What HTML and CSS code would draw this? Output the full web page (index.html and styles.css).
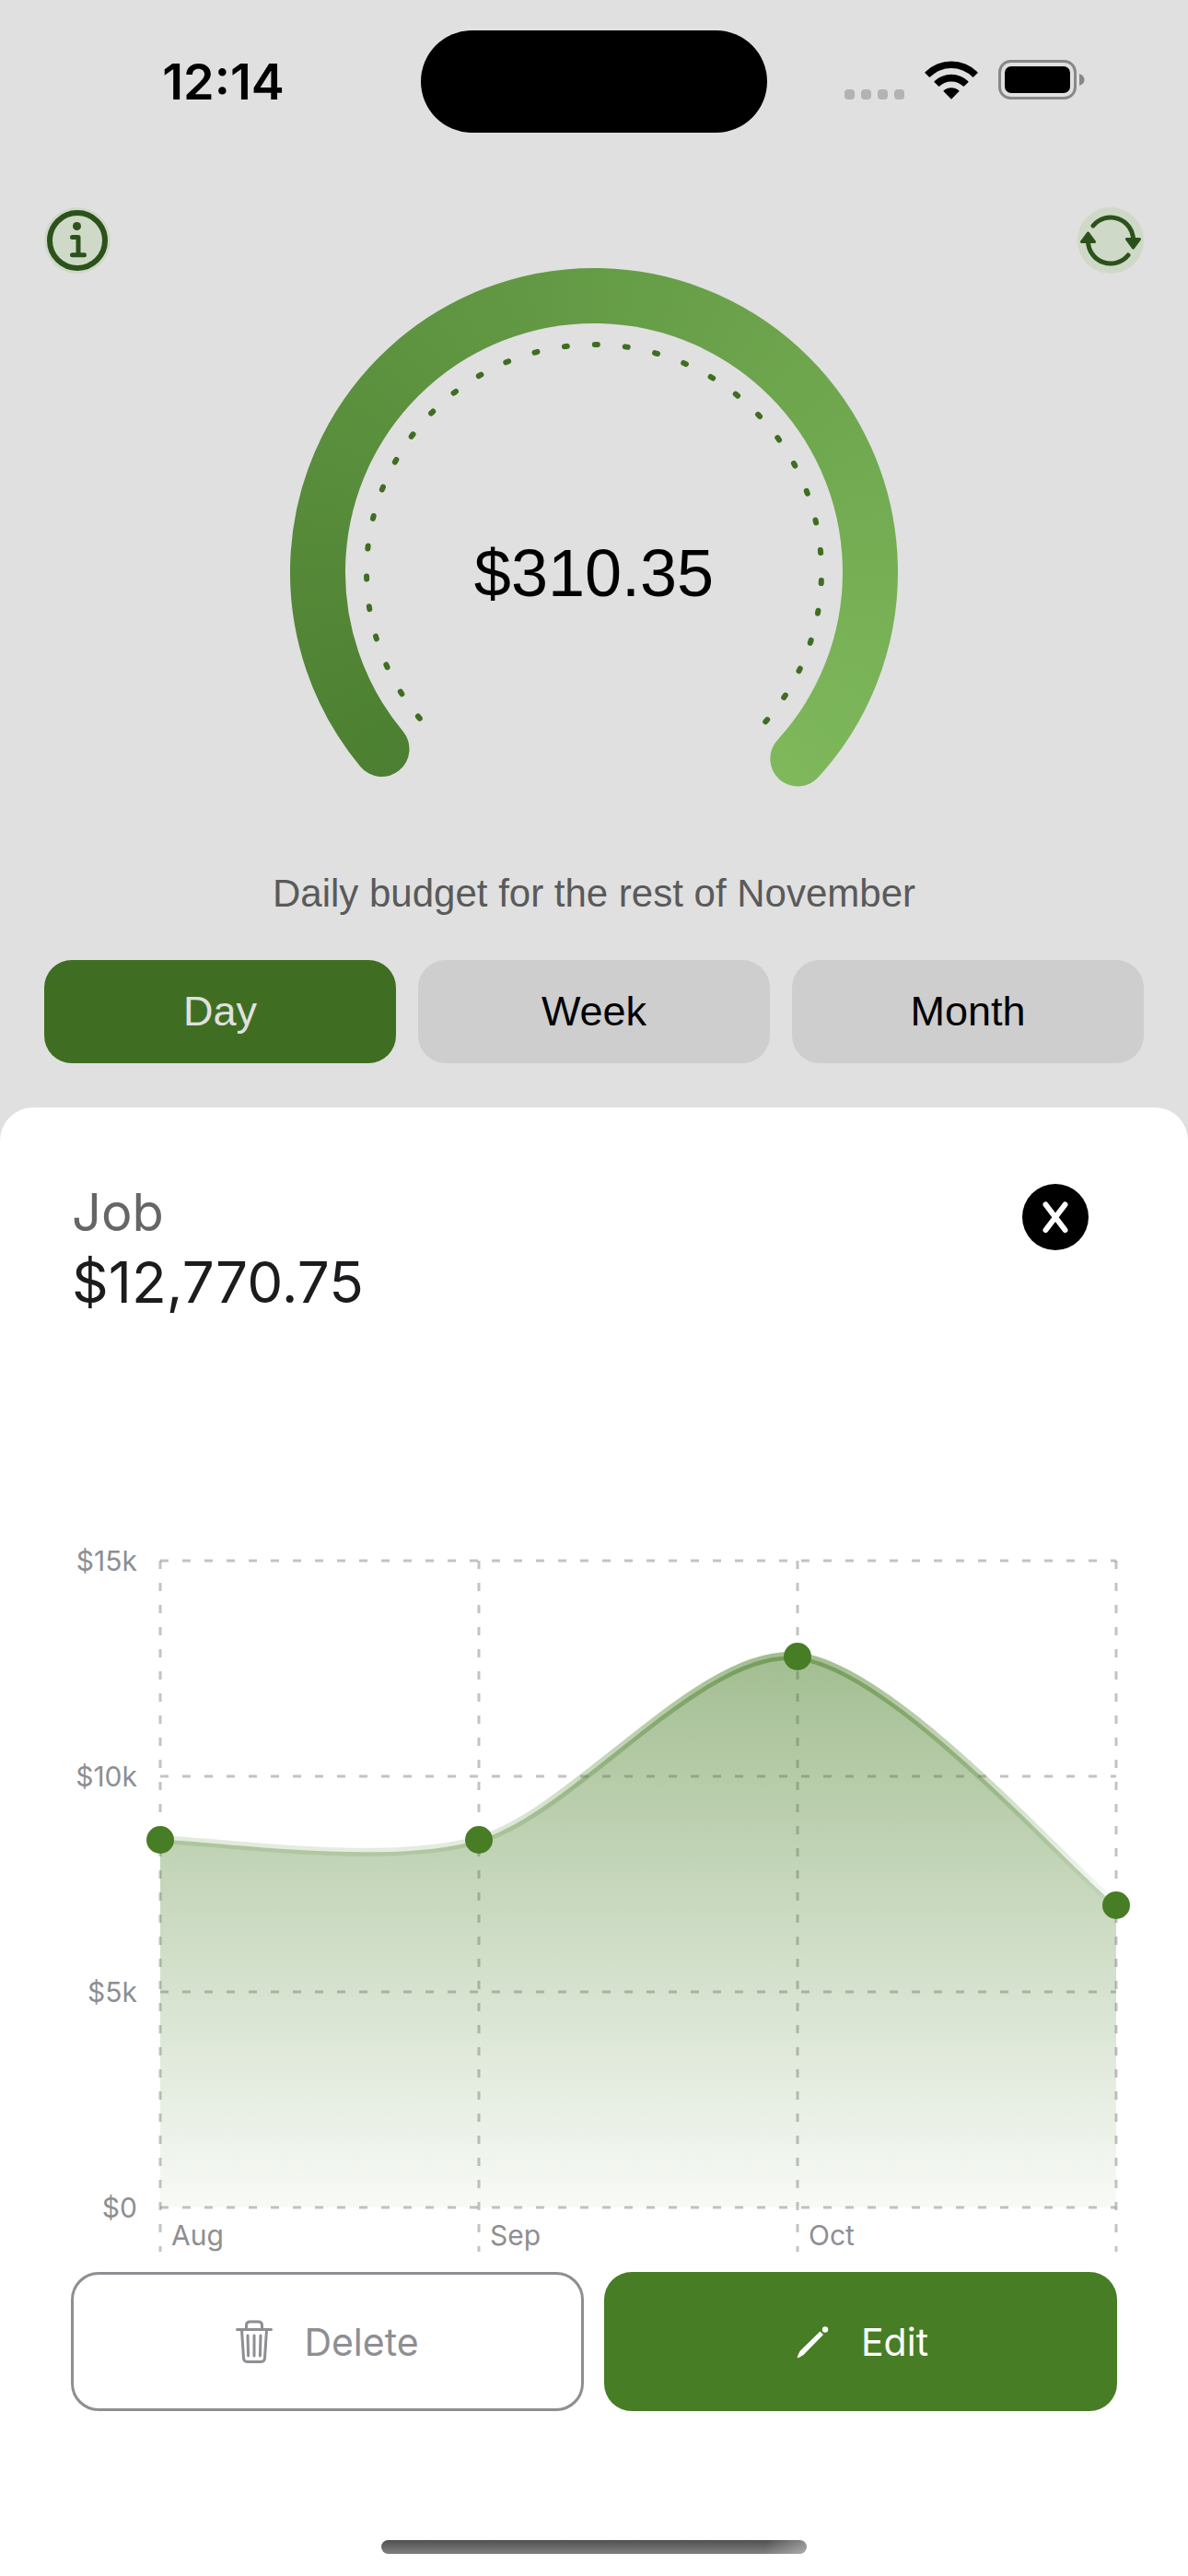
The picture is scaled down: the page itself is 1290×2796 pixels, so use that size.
FILE: index.html
```html
<!DOCTYPE html>
<html lang="en">
  <head>
    <meta charset="UTF-8" />
    <meta name="viewport" content="width=device-width, initial-scale=1" />
    <title>Budget</title>
    <link rel="stylesheet" href="styles.css">
  </head>
  <body>
    <header class="status-bar">
      <span class="time">12:14</span>
      <span class="island"></span>
      <div class="status-icons">
        <svg class="signal" viewBox="0 0 65 11" aria-hidden="true">
          <rect x="0" width="11" height="11" rx="4" />
          <rect x="18" width="11" height="11" rx="4" />
          <rect x="36" width="11" height="11" rx="4" />
          <rect x="54" width="11" height="11" rx="4" />
        </svg>
        <svg class="wifi" viewBox="0 0 58 43" aria-hidden="true">
          <path d="M0.5 13.2a40.5 40.5 0 0 1 57 0q.5 .5 0 1l-4.300 4.300q-.6 .6 -1.200 0a32.500 32.500 0 0 0-46 0q-.6 .6-1.200 0L.5 14.200q-.5-.5 0-1z" />
          <path d="M10.600 23.200a26.500 26.500 0 0 1 36.800 0q.5 .5 0 1l-4.400 4.400q-.6 .6-1.200 0a18.500 18.500 0 0 0-25.600 0q-.6 .6-1.200 0l-4.400-4.400q-.5-.5 0-1z" />
          <path d="M20.700 33.300a12.500 12.500 0 0 1 16.600 0q.5 .5 0 1L29.500 42.200q-.5 .5-1 0l-7.800-7.900q-.5-.5 0-1z" />
        </svg>
        <svg class="battery" viewBox="0 0 94 43" aria-hidden="true">
          <rect class="battery-case" x="1.500" y="1.500" width="82" height="40" rx="12" />
          <rect x="7" y="7" width="71" height="29" rx="7" />
          <path class="battery-tip" d="M88 15q5.500 2 5.500 6.500T88 28z" />
        </svg>
      </div>
    </header>

    <main>
      <section class="overview">
        <div class="toolbar">
          <button class="round-button" aria-label="Information">
            <svg viewBox="0 0 72 72" aria-hidden="true">
              <circle class="line" cx="36" cy="36" r="30" />
              <circle class="solid" cx="35.500" cy="20.500" r="4.500" />
              <path class="line thin" d="M30.500 32.500h6.500V51.500M30.500 51.700h13" />
            </svg>
          </button>
          <button class="round-button" aria-label="Refresh">
            <svg viewBox="0 0 72 72" aria-hidden="true">
              <path class="line thin" d="M17 20A24.500 24.500 0 0 1 60.500 35M55 52A24.500 24.500 0 0 1 11.500 37" />
              <path class="solid join" d="M53.500 34.500h14L60.500 44zM4.500 37.500h14L11.500 28z" />
            </svg>
          </button>
        </div>

        <div class="gauge">
          <svg viewBox="0 0 660 576" aria-hidden="true">
            <mask id="ring" maskUnits="userSpaceOnUse" x="0" y="0" width="660" height="576">
              <path d="M99.500 523A300 300 0 1 1 551.300 533.500" fill="none" stroke="#fff" stroke-width="60" stroke-linecap="round" />
            </mask>
            <foreignObject width="660" height="576" mask="url(#ring)">
              <div class="gauge-fill"></div>
            </foreignObject>
            <path class="gauge-dots" d="M140.800 489.800A247 247 0 1 1 513.600 496.300" />
          </svg>
          <p class="gauge-value">$310.35</p>
        </div>

        <p class="caption">Daily budget for the rest of November</p>

        <div class="periods">
          <button class="period active">Day</button>
          <button class="period">Week</button>
          <button class="period">Month</button>
        </div>
      </section>

      <section class="sheet">
        <div class="sheet-header">
          <div>
            <h2>Job</h2>
            <p class="amount">$12,770.75</p>
          </div>
          <button class="close" aria-label="Close">
            <svg viewBox="0 0 72 72" aria-hidden="true">
              <path d="M25.500 22.500L46.500 50M46.500 22.500L25.500 50" />
            </svg>
          </button>
        </div>

        <svg class="chart" viewBox="0 0 1290 780" role="img" aria-label="Monthly amounts">
          <defs>
            <linearGradient id="area" x1="0" y1="0" x2="0" y2="1">
              <stop offset="0" stop-color="#477d25" stop-opacity="0.5" />
              <stop offset="1" stop-color="#477d25" stop-opacity="0.04" />
            </linearGradient>
          </defs>
          <g class="grid">
            <path d="M174 24H1212M174 258H1212M174 492H1212M174 726H1212" />
            <path d="M174 24V774M520 24V774M866 24V774M1212 24V774" />
          </g>
          <path fill="url(#area)" d="M174 327C226 327 416 357 520 327S762 117 866 128C970 139 1160 357 1212 398V726H174z" />
          <path class="curve" stroke="url(#area)" d="M174 327C226 327 416 357 520 327S762 117 866 128C970 139 1160 357 1212 398" />
          <g class="points">
            <circle cx="174" cy="327" r="15" />
            <circle cx="520" cy="327" r="15" />
            <circle cx="866" cy="128" r="15" />
            <circle cx="1212" cy="398" r="15" />
          </g>
          <g class="labels labels-y">
            <text x="149" y="35">$15k</text>
            <text x="149" y="269">$10k</text>
            <text x="149" y="503">$5k</text>
            <text x="149" y="737">$0</text>
          </g>
          <g class="labels">
            <text x="186" y="767">Aug</text>
            <text x="532" y="767">Sep</text>
            <text x="878" y="767">Oct</text>
          </g>
        </svg>

        <div class="actions">
          <button class="action delete">
            <svg viewBox="0 0 40 48" aria-hidden="true">
              <path d="M1.500 10.500h37M11.500 10V6q0-4 4-4h9q4 0 4 4v4M6.500 11l2 30.500q.3 4 4 4h15q3.700 0 4-4l2-30.500" />
              <path d="M13 17l.6 22M20 17v22M27 17l-.6 22" />
            </svg>
            Delete
          </button>
          <button class="action edit">
            <svg viewBox="0 0 40 48" aria-hidden="true">
              <path d="M5 41q-.5-.5 0-1.500l2.500-5.500L29.500 12.500l3.500 3.500L11.500 38l-5 3q-1 .5-1.500 0z" />
              <circle cx="35" cy="10.500" r="3.200" />
            </svg>
            Edit
          </button>
        </div>

        <div class="home-indicator"></div>
      </section>
    </main>
  </body>
</html>
```
FILE: styles.css
```css
* {
  box-sizing: border-box;
}
body {
  margin: 0;
  min-height: 100vh;
  display: flex;
  flex-direction: column;
  background: #e0e0e0;
  color: #000;
  font-family: "Liberation Sans", Arial, sans-serif;
}
main {
  flex: 1;
  display: flex;
  flex-direction: column;
}
h2,
p {
  margin: 0;
  font-weight: 400;
}
button {
  padding: 0;
  border: 0;
  font: inherit;
  cursor: pointer;
}
svg {
  display: block;
}

/* Status bar */
.status-bar {
  display: grid;
  grid-template-columns: 1fr 376px 1fr;
  align-items: center;
  padding: 33px 0 0;
}
.time {
  padding-right: 32px;
  padding-left: 60px;
  text-align: center;
  font: 600 54px/60px Inter, sans-serif;
}
.island {
  height: 111px;
  border-radius: 56px;
  background: #000;
}
.status-icons {
  display: flex;
  align-items: flex-end;
  justify-content: flex-end;
  gap: 22px;
  padding-right: 112px;
  padding-bottom: 4px;
}
.signal {
  width: 65px;
  fill: #b3b3b3;
}
.wifi {
  width: 58px;
}
.battery {
  width: 94px;
}
.battery-case {
  fill: none;
  stroke: #888;
  stroke-width: 3;
}
.battery-tip {
  fill: #888;
}

/* Overview */
.overview {
  padding: 81px 48px 48px;
}
.toolbar {
  display: flex;
  justify-content: space-between;
}
.round-button {
  width: 72px;
  height: 72px;
  border-radius: 50%;
  background: #cfd9c7;
}
.line {
  fill: none;
  stroke: #2c521b;
  stroke-width: 6;
  stroke-linecap: round;
  stroke-linejoin: round;
}
.thin {
  stroke-width: 5;
}
.solid {
  fill: #2c521b;
}
.join {
  stroke: #2c521b;
  stroke-width: 3;
  stroke-linejoin: round;
}
.gauge {
  display: grid;
  width: 660px;
  max-width: 100%;
  margin: -7px auto 0;
}
.gauge > * {
  grid-area: 1 / 1;
}
.gauge-fill {
  height: 662px;
  background: conic-gradient(from 180deg, #4b7e30 40deg, #7fb95c 320deg);
}
.gauge-dots {
  fill: none;
  stroke: #3f6e22;
  stroke-width: 6;
  stroke-linecap: round;
  stroke-dasharray: 3 30;
}
.gauge-value {
  align-self: center;
  padding-top: 88px;
  text-align: center;
  font-size: 72px;
  line-height: 84px;
}
.caption {
  margin-top: 80px;
  text-align: center;
  color: #5a5a5a;
  font-size: 42px;
  line-height: 48px;
}
.periods {
  display: grid;
  grid-template-columns: repeat(3, 1fr);
  gap: 24px;
  margin-top: 48px;
}
.period {
  height: 112px;
  border-radius: 30px;
  background: #cecece;
  font-size: 45px;
}
.period.active {
  background: #3f6e22;
  color: #e0e0e0;
}

/* Sheet */
.sheet {
  flex: 1;
  display: flex;
  flex-direction: column;
  padding-top: 78px;
  border-radius: 36px 36px 0 0;
  background: #fff;
  font-family: Inter, sans-serif;
}
.sheet-header {
  display: flex;
  align-items: flex-start;
  justify-content: space-between;
  padding: 0 108px 0 78px;
}
.sheet h2 {
  color: #666;
  font-size: 56px;
  line-height: 72px;
}
.amount {
  color: #1c1c1e;
  font-size: 62px;
  line-height: 80px;
}
.close {
  width: 72px;
  height: 72px;
  margin-top: 5px;
  border-radius: 50%;
  background: #000;
}
.close path {
  stroke: #fff;
  stroke-width: 6;
  stroke-linecap: round;
}
.chart {
  width: 100%;
  margin-top: 238px;
}
.grid {
  fill: none;
  stroke: #888;
  stroke-opacity: 0.5;
  stroke-width: 3;
  stroke-dasharray: 9 15;
}
.curve {
  fill: none;
  stroke-width: 9;
}
.points {
  fill: #477d25;
}
.labels {
  fill: #8e8e93;
  font-size: 30px;
}
.labels-y {
  text-anchor: end;
}
.actions {
  display: grid;
  grid-template-columns: 1fr 1fr;
  gap: 22px;
  padding: 0 77px;
  margin-top: 16px;
}
.action {
  display: flex;
  align-items: center;
  justify-content: center;
  gap: 34px;
  height: 151px;
  border-radius: 30px;
  font-size: 41px;
}
.action svg {
  width: 40px;
}
.delete {
  border: 3px solid #8e8e93;
  background: #fff;
  color: #8e8e93;
}
.delete path {
  fill: none;
  stroke: #8e8e93;
  stroke-width: 3;
  stroke-linecap: round;
}
.edit {
  background: #477d25;
  color: #fff;
}
.edit svg {
  fill: #fff;
}
.home-indicator {
  width: 462px;
  max-width: 50%;
  height: 15px;
  margin: auto auto 24px;
  border-radius: 8px;
  background: linear-gradient(100deg, transparent 90%, rgba(255, 255, 255, 0.35)),
    linear-gradient(#505050, #808080);
}
```
